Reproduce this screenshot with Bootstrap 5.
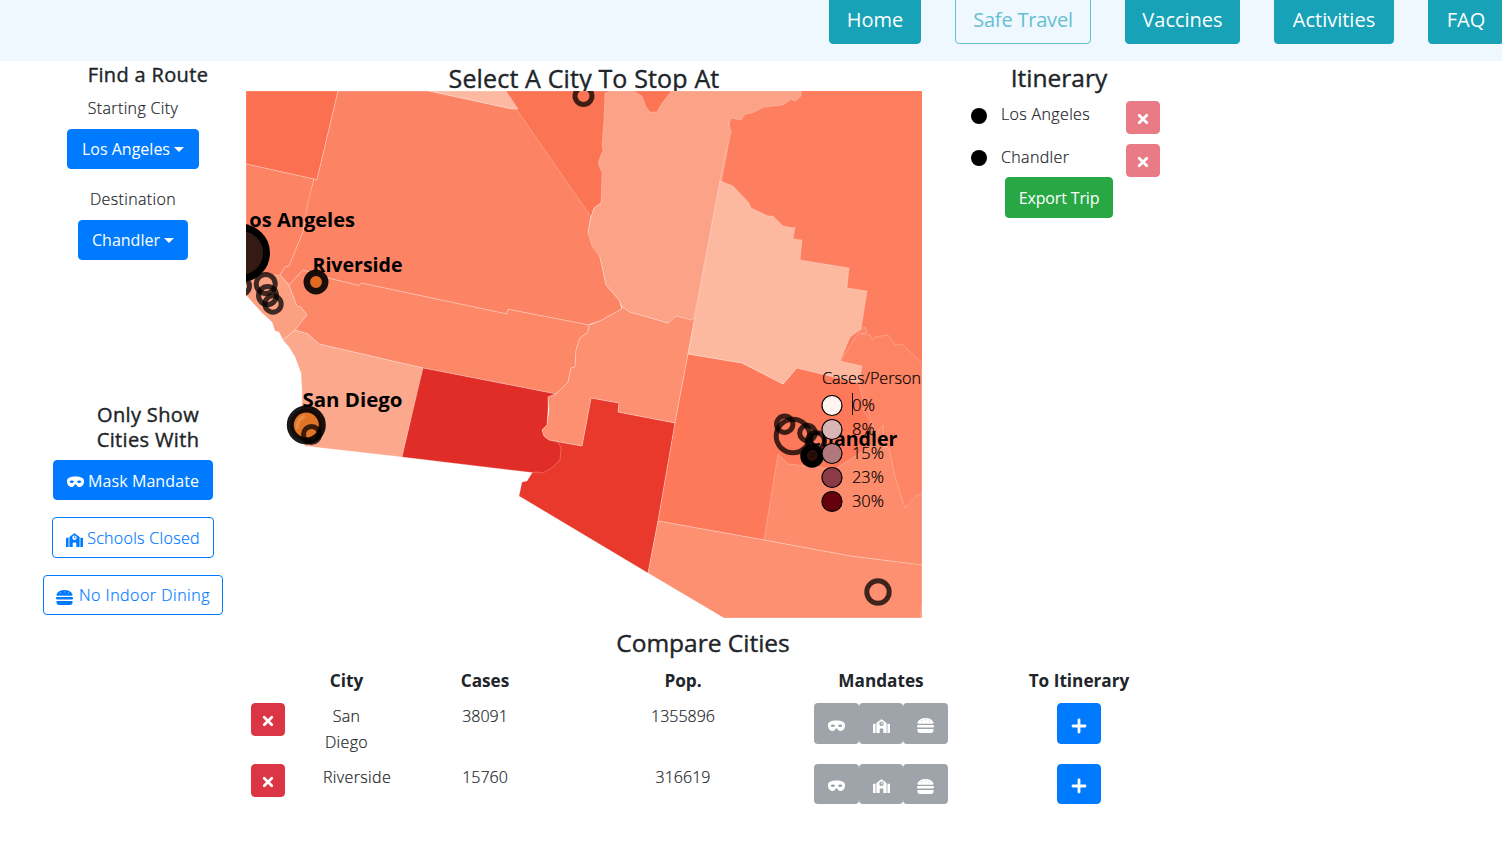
<!DOCTYPE html>
<html lang="en">
<head>
<meta charset="utf-8">
<meta name="viewport" content="width=device-width, initial-scale=1">
<title>Safe Travel</title>
<link href="https://cdn.jsdelivr.net/npm/bootstrap@5.3.0/dist/css/bootstrap.min.css" rel="stylesheet">
<style>
body{font-family:"Open Sans","Noto Sans",sans-serif;font-size:16px;font-weight:300;line-height:26px;color:#212529;background:#fff;overflow:hidden;height:858px}
.topbar{height:61px;background:#f0f8ff;padding-left:829px;gap:34px;overflow:hidden}
.topbar .btn{height:50px;margin-top:-6px;flex:none;border-radius:4px;font-size:20px;font-weight:400;line-height:30px;padding:2px 0 0;white-space:nowrap;color:#fff;background:#17a2b8;border:1px solid #17a2b8}
.topbar .btn.current{background:transparent;color:#17a2b8;opacity:.65;letter-spacing:-.2px}
.w-home{width:92px}.w-safe{width:136px}.w-vac{width:115px}.w-act{width:120px}.w-faq{width:76px}
.btn{display:flex;align-items:center;justify-content:center;font-size:16px;line-height:24px;border-radius:4px;padding:0;height:40px;white-space:nowrap;font-weight:400}
.btn-primary{background:#007bff;border-color:#007bff}
.btn-outline-primary{color:#007bff;border-color:#007bff;font-weight:300;letter-spacing:.3px;-webkit-text-stroke:.2px}
.btn-success{background:#28a745;border-color:#28a745;width:108px;height:41px;margin:0 0 0 83px;letter-spacing:-.15px}
.btn-danger{background:#dc3545;border-color:#dc3545;width:34px;height:33px;padding:3px 1px 0 0}
.btn-danger:disabled{background:#dc3545;border-color:#dc3545}
.main-area{height:557px}
.side{width:246px;flex:none}
h4,h3{font-weight:400;margin:0;white-space:nowrap;-webkit-text-stroke:.4px}
h4{font-size:20px;line-height:25px;letter-spacing:.35px}
h3{font-size:24.5px;line-height:30px}
.side h4{width:296px;text-align:center}
.lab{width:266px;text-align:center;line-height:26px}
.lab,.nm,.city,.num{-webkit-text-stroke:.2px}
.lab,.nm,.city{letter-spacing:.35px}
.caret{width:0;height:0;border:5px solid transparent;border-top-color:#fff;border-bottom:0;margin-left:4px}
.mid{width:676px;flex:none}
.mid h3{font-size:25px;letter-spacing:.15px;padding-top:2px;height:30px}
.mid svg{display:block}
.trip{width:260px;flex:none}
.trip h3{width:274px;text-align:center;padding-top:2px}
.stop{height:33px}
.stop .dot{width:16px;height:16px;border-radius:50%;background:#000;margin-left:49px}
.stop .nm{width:125px;margin-left:14px;line-height:26px}
.compare{width:930px;margin-left:248px}
.compare h3{padding-top:9px;text-align:center;width:910px;line-height:31px}
.crow{display:grid;grid-template-columns:59px 79px 198px 198px 198px 198px;text-align:center}
.crow>b{font-weight:700;font-size:17.200px;line-height:26px}
.crow .btn-danger{margin-left:3px}
.crow .city{padding:0 16px}
.crow.solo .city{padding:0}
.mand{width:134px;margin:0 auto}
.mand .btn,.mand .btn:disabled{flex:1;height:41px;background:#6c757d;border:0;opacity:.65;color:#fff;padding-top:4px}
.plus{width:44px;height:41px;margin:0 auto;padding-top:4px}
.solo .mand .btn,.solo .plus{height:40px}
</style>
</head>
<body>
<svg width="0" height="0" class="position-absolute" aria-hidden="true">
<defs>
<symbol id="mask" viewBox="0 0 17 12"><path fill="currentColor" fill-rule="evenodd" d="M8.500 .5C3 .5 0 2 0 5.200 0 8.600 2 11 4.700 11 6.800 11 7.400 8.200 8.500 8.200S10.200 11 12.300 11C15 11 17 8.600 17 5.200 17 2 14 .5 8.500 .5ZM4.800 7.100C3.700 7.100 3 6.500 2.600 5.700 3.100 4.800 3.900 4.400 4.800 4.400S6.600 4.800 7 5.700C6.600 6.500 5.900 7.100 4.800 7.100ZM12.200 7.100C11.100 7.100 10.400 6.500 10 5.700 10.400 4.800 11.300 4.400 12.200 4.400S13.900 4.800 14.400 5.700C14 6.500 13.300 7.100 12.200 7.100Z"/></symbol>
<symbol id="school" viewBox="0 0 17 14"><path fill="currentColor" fill-rule="evenodd" d="M0 5.500Q0 4.700 .8 4.700H2.600V14H0ZM14.400 4.700H16.200Q17 4.700 17 5.500V14H14.400ZM3.400 4 8 .4Q8.500 0 9 .4L13.600 4V14H10.300V10.200Q10.300 9.500 9.600 9.500H7.400Q6.700 9.500 6.700 10.200V14H3.400ZM8.500 2.500A2.200 2.200 0 1 0 8.500 6.900 2.200 2.200 0 1 0 8.500 2.500ZM8.200 3.300H8.900V4.500H9.800V5.200H8.200Z"/></symbol>
<symbol id="burger" viewBox="0 0 17 15"><path fill="currentColor" fill-rule="evenodd" d="M1.600 5.700C.5 5.700 .2 4.900 .7 3.900 2 1.300 4.800 0 8.500 0S15 1.300 16.300 3.900C16.800 4.900 16.500 5.700 15.400 5.700ZM4 2.500V3.300H4.800V2.500ZM8.100 1.500V2.300H8.900V1.500ZM12.200 2.500V3.300H13V2.500ZM1.200 6.900H15.800A1.100 1.100 0 0 1 15.800 9.500H1.200A1.100 1.100 0 0 1 1.200 6.900ZM.5 11H16.500V12.300Q16.500 15 14 15H3Q.5 15 .5 12.300Z"/></symbol>
<symbol id="cross" viewBox="0 0 12 12"><path fill="none" stroke="currentColor" stroke-width="2.700" stroke-linecap="round" d="M2.200 2.200 9.800 9.800M9.800 2.200 2.200 9.800"/></symbol>
<symbol id="add" viewBox="0 0 16 16"><path fill="none" stroke="currentColor" stroke-width="2.800" stroke-linecap="round" d="M8 2V14M2 8H14"/></symbol>
</defs>
</svg>

<nav class="topbar d-flex">
<a class="btn w-home">Home</a><a class="btn current w-safe">Safe Travel</a><a class="btn w-vac">Vaccines</a><a class="btn w-act">Activities</a><a class="btn w-faq">FAQ</a>
</nav>

<main class="main-area d-flex">
<aside class="side">
<h4 style="padding-top:1px">Find a Route</h4>
<div class="lab" style="padding-top:8px">Starting City</div>
<button class="btn btn-primary" style="width:132px;margin:8px 0 17px 67px">Los Angeles<span class="caret"></span></button>
<div class="lab">Destination</div>
<button class="btn btn-primary" style="width:110px;margin:8px 0 142px 78px">Chandler<span class="caret"></span></button>
<h4>Only Show<br>Cities With</h4>
<button class="btn btn-primary" style="width:160px;margin:8px 0 17px 53px"><svg width="17" height="12" class="me-1 mt-1"><use href="#mask"/></svg><span style="letter-spacing:.1px;padding-top:1px">Mask Mandate</span></button>
<button class="btn btn-outline-primary" style="width:162px;height:41px;margin:0 0 17px 52px"><svg width="17" height="14" class="me-1 mt-1"><use href="#school"/></svg>Schools Closed</button>
<button class="btn btn-outline-primary" style="width:180px;margin-left:43px"><svg width="17" height="15" class="mt-1" style="margin-right:6px"><use href="#burger"/></svg><span style="letter-spacing:.5px">No Indoor Dining</span></button>
</aside>

<section class="mid">
<h3 class="text-center">Select A City To Stop At</h3>
<svg width="676" height="527" viewBox="246 91 676 527">
<path fill="#fca286" d="M650 118H738L700 322H670Z"/>
<path fill="#fd7f60" d="M722 181 728 150 730 123 736 91H922V400H800Z"/>
<g stroke="#fff" stroke-opacity=".3" stroke-width=".8" stroke-linejoin="round">
<path fill="#fb7050" d="M246 91H338L317 179.500 314 179 246 164Z"/>
<path fill="#fc8464" d="M246 164 314 179 308 205 303 232 289 266 285 267 280 275 290 290 260 306 246 294Z"/>
<path fill="#fc8464" d="M338 91H429L512 109 518 109 591 216 588 232 600 257 606 285 619 300 622 309 609 316 600 321 590 324 589 325 508 309.300 507 314 361 283 359 285.500 332 279 303 270 289 285 280 275 285 267 289 266 303 232 308 202 314 179 317 179.500Z"/>
<path fill="#fb7454" d="M504 91 591 217 594 208 601 203 620 125H662L672 91Z"/>
<path fill="#fdb9a1" d="M429 91H506L518 109 512 109Z"/>
<path fill="#fca082" d="M246 275H280L289 285 297 306 301 307 307 315 295 330 283 340 279 332 275 331 272 322 262 313 253 303 246 295Z"/>
<path fill="#fd8868" d="M289 285 303 270 332 279 359 285.500 361 283 507 314 508 309.300 589 325 588 332 580 338 576 350 575 367 571 368 568 382 556 394 423 368 319 344 308 334 295 330 307 315 301 307 297 306Z"/>
<path fill="#fca88c" d="M295 330 308 334 319 344 423 368 415 407 410 423 402 457 305 446 300 430 302 405 302 390 301 373 295 357 289 347 283 340Z"/>
<path fill="#e9392c" d="M591 398 619 403 618 412 675 423 658 521 648 573 519 496 522 482 527 481 532 473 549 440 582 446Z"/>
<path fill="#e12d27" d="M423 368 556 394 548 397 548 410 547 425 542 430 544 436 549 440 558 442 561 448 560 460 553 467 543 473 537 472 532 472.500 402 457Z"/>
<path fill="#fc9070" d="M622 307 630 312 668 323 676 316 692 320 695 317 688 354 675 423 618 412 619 403 591 398 582 446 549 440 544 436 542 430 547 425 549 410 548 397 556 394 568 382 571 368 575 367 576 350 580 338 588 332 589 325 600 321 609 316 622 309Z"/>
<path fill="#fca286" d="M605 93 604 120 602 145 603 150 598 163 602 173 601 203 594 208 591 217 588 232 592 246 600 257 606 285 619 300 622 307 630 312 668 323 676 316 692 320 694 317 720 181 726 150 729 142 731 132 728 123 732 118 741 120 745 114 752 113 764 107 783 105 791 99 795 101 801 96V91H671L670 93 662 103 657 112H650L646 107 642 96 635 92 628 91H612Z"/>
<path fill="#fd8464" d="M861 329 865 327 867 332 861 334 870 335 872 340 875 337 888 335 895 345 902 344 922 363V566L835 550V370Z"/>
<path fill="#fd795a" d="M688 354 742 363 783 384 797 368 859 383 863 400 868 411 876 434 872 470 835 469 764 540 658 521 675 423Z"/>
<path fill="#fd8c6c" d="M778 454 788 464 835 469 876 443 889 448 895 477 905 508 917 495 922 494V565L850 556 764 540Z"/>
<path fill="#fdb9a0" d="M720 181 733 186 749 203 751 208 768 216H773L783 226 793 228 795 227 793 239 802 240 800 260 849 268 847 288 867 291 861 329 850 337 840 361 862 366 859 383 797 368 783 384 742 363 688 354 695 317Z"/>
<path fill="#fc9070" d="M658 521 764 540 850 556 922 565V618H724L648 573Z"/>
<path fill="none" d="M863 408 876 434 883 425 884 447M922 605 920 618"/>
</g>
<g fill="none" stroke="#000" stroke-opacity=".75" stroke-width="5">
<circle cx="241" cy="286" r="8.500"/><circle cx="265.700" cy="284" r="9.500"/><circle cx="267.500" cy="295.500" r="9"/><circle cx="273" cy="304" r="8.200"/>
<circle cx="583.500" cy="96" r="8.500"/><circle cx="793" cy="436" r="16.800"/><circle cx="784.700" cy="424.200" r="8.200"/><circle cx="807.500" cy="433" r="7.800"/><circle cx="816" cy="441" r="8.500"/><circle cx="878" cy="592" r="11.200"/>
</g>
<circle cx="241" cy="253" r="25.500" fill="#351a14" stroke="#000" stroke-width="7"/>
<circle cx="316" cy="282" r="9.200" fill="#e46a20" stroke="#1b0e0a" stroke-width="6.500"/>
<circle cx="306.300" cy="425" r="16" fill="#e27428" stroke="#000" stroke-opacity=".9" stroke-width="7"/>
<path d="M297 429Q297 419 305 416" fill="none" stroke="#e68b48" stroke-width="3"/>
<circle cx="311.500" cy="434.500" r="8" fill="none" stroke="#000" stroke-opacity=".75" stroke-width="5"/>
<circle cx="812" cy="456" r="8.500" fill="#220b07" stroke="#000" stroke-width="6.500"/><circle cx="812.500" cy="455" r="4.200" fill="none" stroke="#2e120d" stroke-width="1.500"/>
<g font-size="20" font-weight="700" fill="#000">
<text x="238" y="227" textLength="117" lengthAdjust="spacingAndGlyphs">Los Angeles</text>
<text x="312.500" y="272" textLength="90" lengthAdjust="spacingAndGlyphs">Riverside</text>
<text x="302.500" y="407" textLength="100" lengthAdjust="spacingAndGlyphs">San Diego</text>
<text x="808.500" y="446" textLength="89" lengthAdjust="spacingAndGlyphs">Chandler</text>
</g>
<g stroke="#000" stroke-width="1.200"><circle cx="832" cy="405.500" r="10" fill="#fff5f0"/><circle cx="832" cy="429.500" r="10" fill="#d9b6b5"/><circle cx="832" cy="453.500" r="10" fill="#b2787e"/><circle cx="832" cy="477.500" r="10" fill="#8c3b46"/><circle cx="832" cy="501.500" r="10" fill="#67000d"/></g>
<g font-size="16" font-weight="300" fill="#000" stroke="#000" stroke-width=".2">
<text x="822" y="384" textLength="99" lengthAdjust="spacingAndGlyphs">Cases/Person</text>
<text x="852" y="411" textLength="23" lengthAdjust="spacingAndGlyphs">0%</text><text x="852" y="435" textLength="23" lengthAdjust="spacingAndGlyphs">8%</text><text x="852" y="459" textLength="32" lengthAdjust="spacingAndGlyphs">15%</text><text x="852" y="483" textLength="32" lengthAdjust="spacingAndGlyphs">23%</text><text x="852" y="507" textLength="32" lengthAdjust="spacingAndGlyphs">30%</text>
</g>
<path d="M852.500 393V415" stroke="#111"/>
</svg>
</section>

<aside class="trip">
<h3>Itinerary</h3>
<div class="stop d-flex align-items-start" style="margin-top:8px"><span class="dot" style="margin-top:7px"></span><span class="nm">Los Angeles</span><button class="btn btn-danger" disabled><svg width="12" height="12"><use href="#cross"/></svg></button></div>
<div class="stop d-flex align-items-start" style="margin-top:10px"><span class="dot" style="margin-top:6px"></span><span class="nm">Chandler</span><button class="btn btn-danger" disabled><svg width="12" height="12"><use href="#cross"/></svg></button></div>
<button class="btn btn-success">Export Trip</button>
</aside>
</main>

<section class="compare">
<h3>Compare Cities</h3>
<div class="crow" style="margin:10px 0 9px"><span></span><b>City</b><b>Cases</b><b>Pop.</b><b>Mandates</b><b>To Itinerary</b></div>
<div class="crow" style="height:61px">
<div><button class="btn btn-danger"><svg width="12" height="12"><use href="#cross"/></svg></button></div><span class="city">San Diego</span><span class="num">38091</span><span class="num">1355896</span>
<div class="mand d-flex"><button class="btn" disabled><svg width="17" height="12"><use href="#mask"/></svg></button><button class="btn" disabled><svg width="17" height="14"><use href="#school"/></svg></button><button class="btn" disabled><svg width="17" height="15"><use href="#burger"/></svg></button></div>
<div><button class="btn btn-primary plus"><svg width="16" height="16"><use href="#add"/></svg></button></div>
</div>
<div class="crow solo">
<div><button class="btn btn-danger"><svg width="12" height="12"><use href="#cross"/></svg></button></div><span class="city ps-3">Riverside</span><span class="num">15760</span><span class="num">316619</span>
<div class="mand d-flex"><button class="btn" disabled><svg width="17" height="12"><use href="#mask"/></svg></button><button class="btn" disabled><svg width="17" height="14"><use href="#school"/></svg></button><button class="btn" disabled><svg width="17" height="15"><use href="#burger"/></svg></button></div>
<div><button class="btn btn-primary plus"><svg width="16" height="16"><use href="#add"/></svg></button></div>
</div>
</section>
<script src="https://cdn.jsdelivr.net/npm/bootstrap@5.3.0/dist/js/bootstrap.bundle.min.js"></script>
</body>
</html>
